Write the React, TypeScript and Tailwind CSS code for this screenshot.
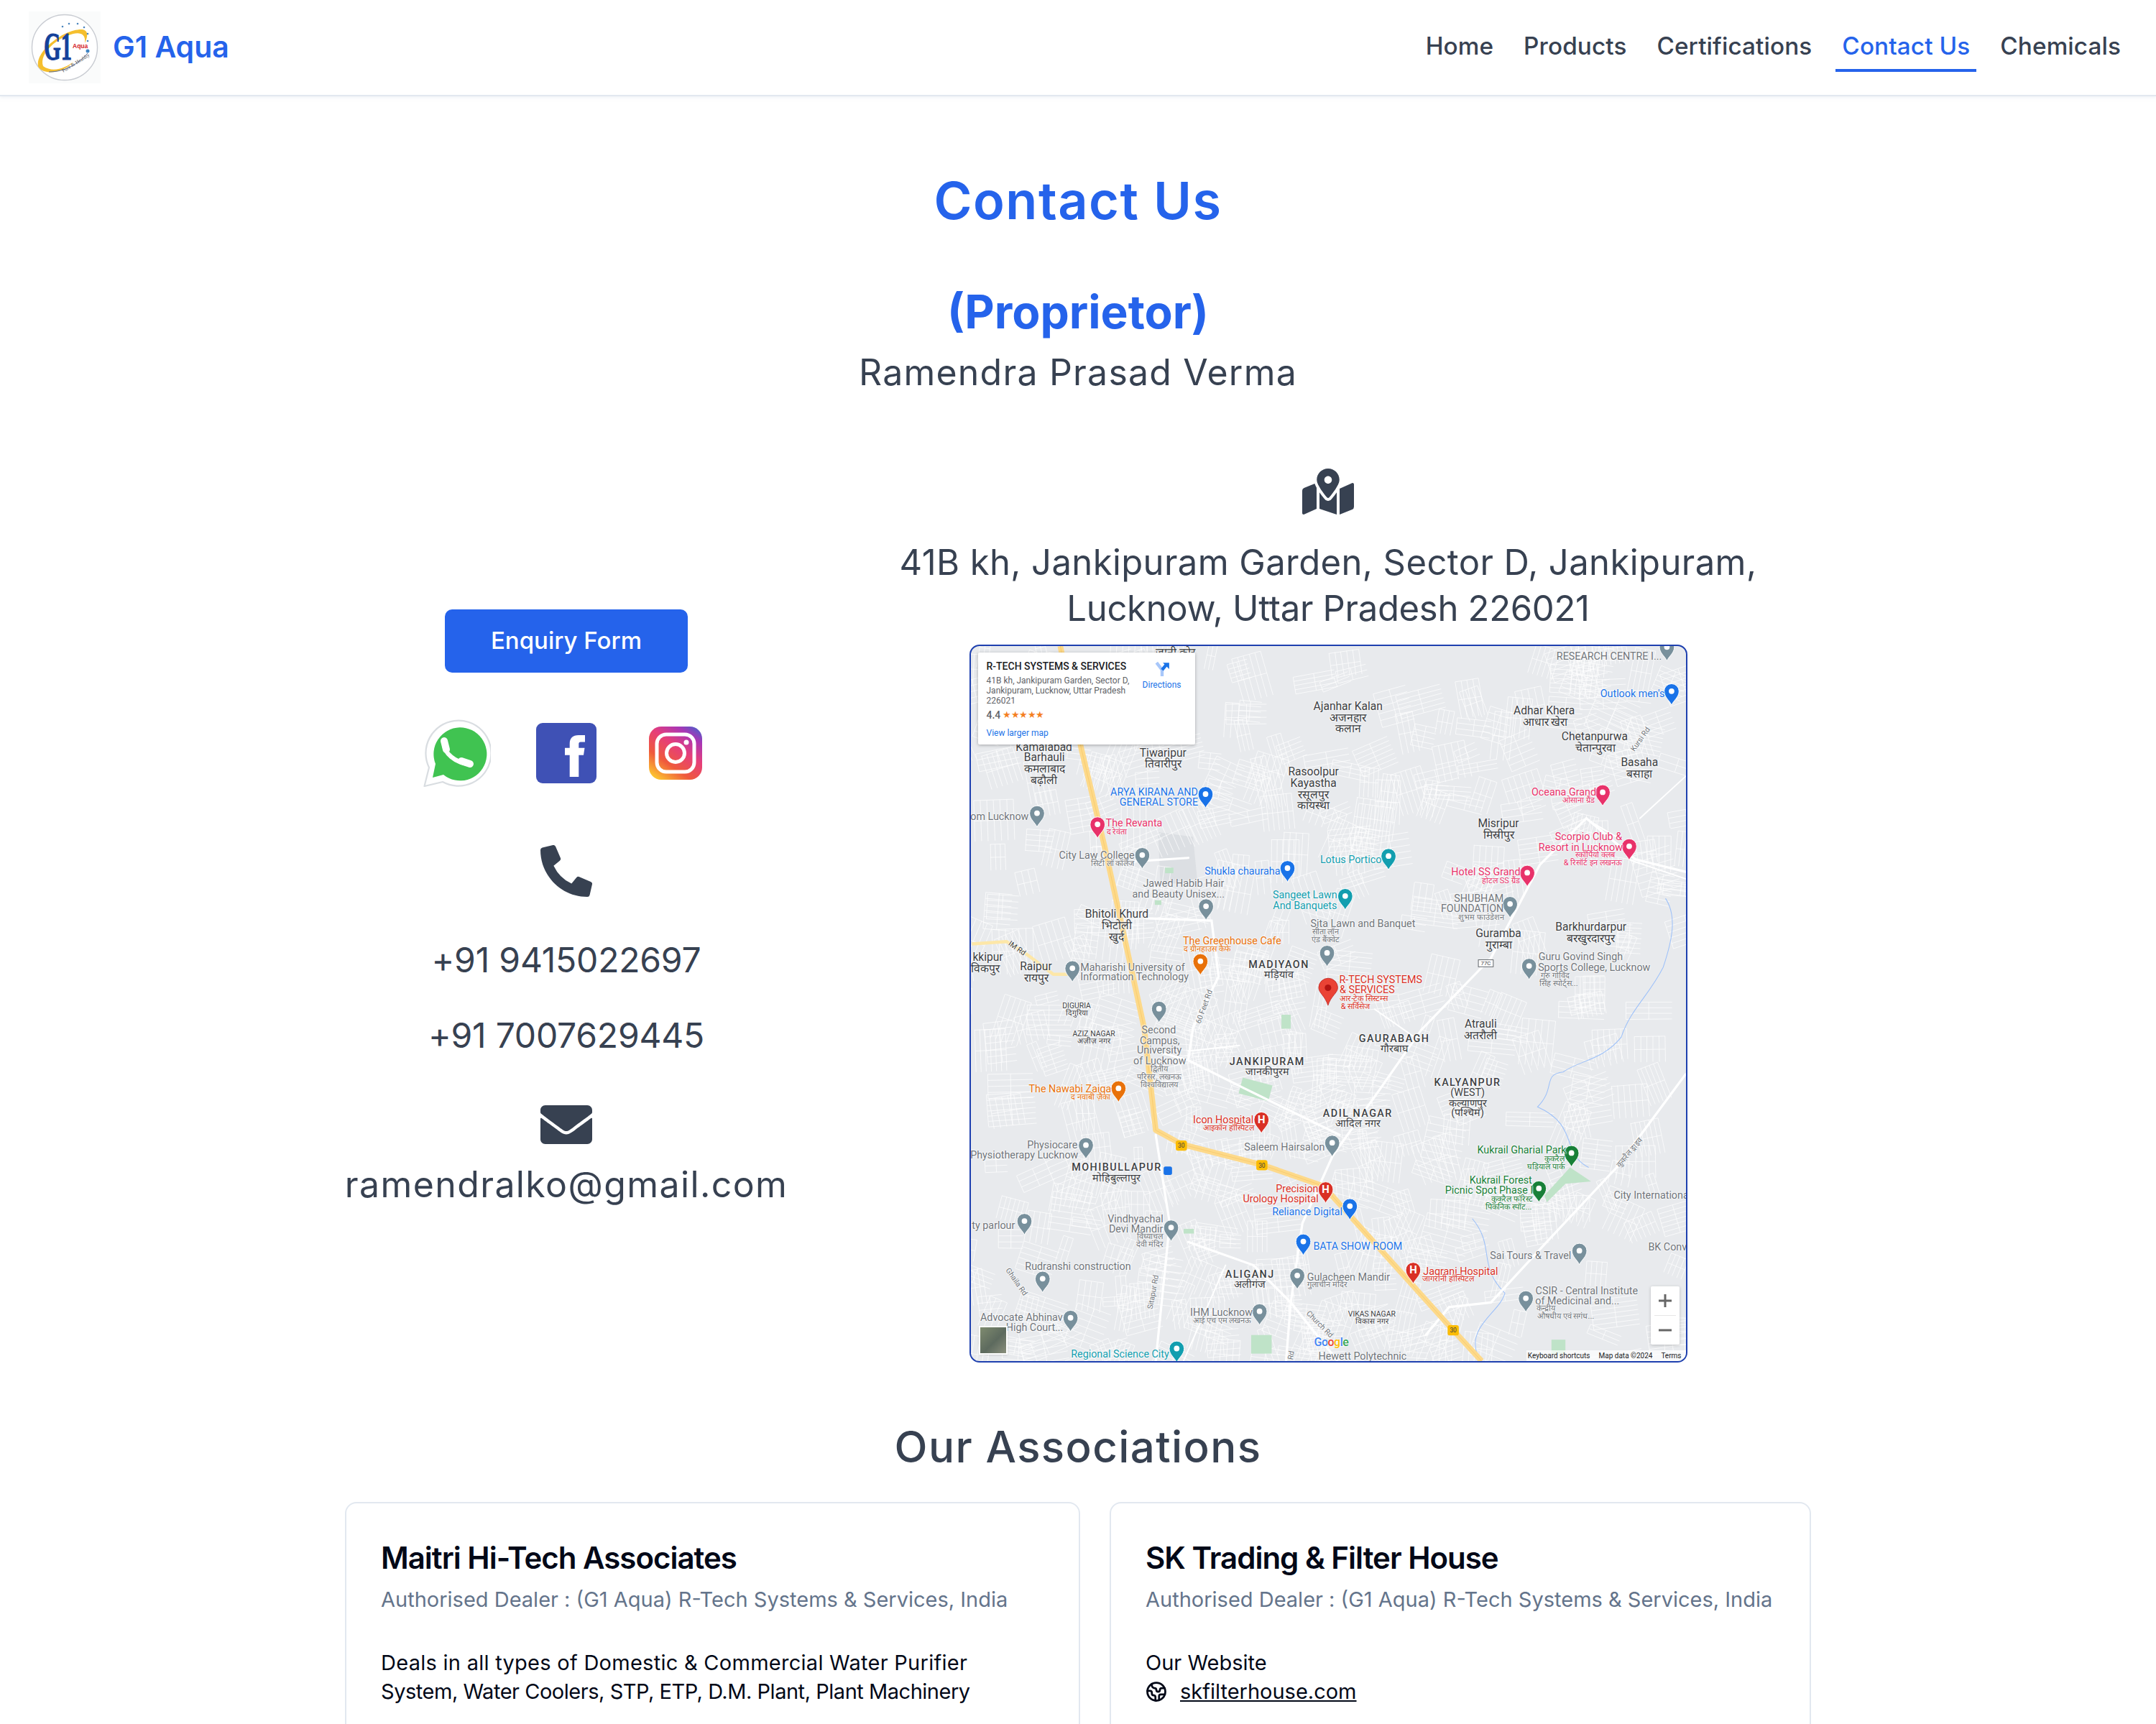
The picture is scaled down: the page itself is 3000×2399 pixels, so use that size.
import { FaEnvelope, FaMapMarkedAlt, FaPhoneAlt } from 'react-icons/fa';
import { Earth } from 'lucide-react';

const navItems = ['Home', 'Products', 'Certifications', 'Contact Us', 'Chemicals'];

// map coordinates are in a 1536 unit space, scaled down to the 999px frame
const K = 0.65;
const DARK = '#3c4043';
const GREY = '#70757a';
const BLUE = '#1a73e8';
const TEAL = '#129eaf';
const PINK = '#e8326a';
const ORANGE = '#e8710a';
const RED = '#d93025';
const GREEN = '#188038';

type Label = [string, number, number, string?, number?, number?];

const labels: Label[] = [
  ['जानी कोर', 452, 25], ['Kamalabad', 170, 228],
  ['Ajanhar Kalan', 821, 140], ['अजनहार', 821, 165], ['कलान', 821, 189],
  ['Adhar Khera', 1241, 150], ['आधार खेरा', 1243, 175],
  ['Chetanpurwa', 1349, 206], ['चेतान्पुरवा', 1350, 230],
  ['Basaha', 1445, 261], ['बसाहा', 1445, 286],
  ['Rasoolpur', 747, 280], ['Kayastha', 747, 305], ['रसूलपुर', 747, 330], ['कायस्था', 747, 353],
  ['Tiwaripur', 425, 240], ['तिवारीपुर', 425, 264],
  ['Barhauli', 171, 250], ['कमलाबाद', 171, 275], ['बढ़ौली', 170, 299],
  ['Misripur', 1143, 392], ['मिस्रीपुर', 1143, 416],
  ['Bhitoli Khurd', 326, 585], ['भिटोली', 326, 610], ['खुर्द', 326, 634],
  ['Guramba', 1143, 627], ['गुराम्बा', 1143, 652],
  ['Barkhurdarpur', 1341, 613], ['बरखुरदारपुर', 1341, 638],
  ['Raipur', 153, 698], ['रायपुर', 153, 723],
  ['kkipur', 50, 678], ['विकपुर', 45, 703],
  ['Atrauli', 1105, 821], ['अतरौली', 1105, 845],
  ['MADIYAON', 673, 692], ['मड़ियांव', 673, 713, DARK, 22],
  ['GAURABAGH', 920, 850], ['गौरबाघ', 920, 871, DARK, 22],
  ['JANKIPURAM', 648, 899], ['जानकीपुरम', 648, 921, DARK, 22],
  ['KALYANPUR', 1077, 944], ['(WEST)', 1077, 966, DARK, 22], ['कल्याणपुर', 1077, 988, DARK, 22], ['(पश्चिम)', 1077, 1009, DARK, 22],
  ['ADIL NAGAR', 842, 1010], ['आदिल नगर', 842, 1032, DARK, 22],
  ['MOHIBULLAPUR', 326, 1126], ['मोहिबुल्लापुर', 326, 1149, DARK, 22],
  ['ALIGANJ', 611, 1354], ['अलीगंज', 611, 1376, DARK, 22],
  ['DIGURIA', 240, 781, DARK, 16], ['दिगुरिया', 240, 796, DARK, 16],
  ['AZIZ NAGAR', 277, 841, DARK, 16], ['अज़ीज़ नगर', 277, 856, DARK, 16],
  ['VIKAS NAGAR', 872, 1440, DARK, 16], ['विकास नगर', 872, 1456, DARK, 16],

  ['RESEARCH CENTRE I...', 1380, 31, GREY], ['om Lucknow', 75, 375, GREY],
  ['City Law College', 283, 458, GREY], ['सिटी लॉ कॉलेज', 317, 476, GREY, 17],
  ['Jawed Habib Hair', 469, 518, GREY], ['and Beauty Unisex...', 458, 540, GREY],
  ['SHUBHAM', 1101, 550, GREY], ['FOUNDATION', 1087, 572, GREY], ['शुभम फाउंडेशन', 1106, 591, GREY, 17],
  ['Sita Lawn and Banquet', 853, 604, GREY], ['सीता लॉन', 773, 622, GREY, 17], ['एंड बैंक्वेट', 773, 639, GREY, 17],
  ['Guru Govind Singh', 1319, 675, GREY], ['Sports College, Lucknow', 1348, 697, GREY],
  ['गुरु गोविंद', 1264, 716, GREY, 17], ['सिंह स्पोर्ट्स...', 1272, 733, GREY, 17],
  ['Maharishi University of', 360, 697, GREY], ['Information Technology', 364, 718, GREY],
  ['Second', 416, 832, GREY], ['Campus,', 418, 854, GREY], ['University', 417, 875, GREY], ['of Lucknow', 418, 897, GREY],
  ['द्वितीय', 417, 916, GREY, 17], ['परिसर, लखनऊ', 417, 933, GREY, 17], ['विश्वविद्यालय', 417, 950, GREY, 17],
  ['Physiocare', 188, 1078, GREY], ['Physiotherapy Lucknow', 128, 1099, GREY],
  ['Saleem Hairsalon', 685, 1082, GREY],
  ['Vindhyachal', 366, 1236, GREY], ['Devi Mandir', 367, 1258, GREY], ['विंध्याचल', 397, 1275, GREY, 17], ['देवी मंदिर', 397, 1292, GREY, 17],
  ['ty parlour', 62, 1250, GREY], ['Rudranshi construction', 243, 1338, GREY],
  ['Gulacheen Mandir', 822, 1360, GREY], ['गुलाचीन मंदिर', 777, 1377, GREY, 17],
  ['Sai Tours & Travel', 1212, 1315, GREY], ['BK Conv', 1505, 1296, GREY], ['City Internationa', 1470, 1186, GREY],
  ['CSIR - Central Institute', 1332, 1390, GREY], ['of Medicinal and...', 1312, 1412, GREY],
  ['केन्द्रीय', 1245, 1429, GREY, 17], ['औषधीय एवं सगंध...', 1287, 1446, GREY, 17],
  ['Advocate Abhinav', 122, 1447, GREY], ['High Court...', 150, 1469, GREY],
  ['IHM Lucknow', 550, 1436, GREY], ['आई एच एम लखनऊ', 552, 1454, GREY, 17],
  ['Hewett Polytechnic', 852, 1530, GREY],

  ["Outlook men's", 1430, 112, BLUE], ['ARYA KIRANA AND', 406, 323, BLUE], ['GENERAL STORE', 416, 344, BLUE],
  ['Shukla chauraha', 595, 492, BLUE], ['Reliance Digital', 734, 1221, BLUE], ['BATA SHOW ROOM', 842, 1294, BLUE],

  ['Lotus Portico', 827, 467, TEAL], ['Sangeet Lawn', 729, 543, TEAL], ['And Banquets', 729, 565, TEAL],
  ['Regional Science City', 333, 1525, TEAL],

  ['Oceana Grand', 1283, 323, PINK], ['ओसाना ग्रैंड', 1315, 341, PINK, 17],
  ['Scorpio Club &', 1336, 418, PINK], ['Resort in Lucknow', 1319, 440, PINK],
  ['स्कॉर्पियो क्लब', 1350, 458, PINK, 17], ['& रिसॉर्ट इन लखनऊ', 1345, 475, PINK, 17],
  ['Hotel SS Grand', 1116, 493, PINK], ['होटल SS ग्रैंड', 1148, 513, PINK, 17],
  ['The Revanta', 363, 389, PINK], ['द रेवंता', 326, 408, PINK, 17],

  ['The Greenhouse Cafe', 573, 640, ORANGE], ['द ग्रीनहाउस कैफे', 520, 659, ORANGE, 17],
  ['The Nawabi Zaiqa', 226, 958, ORANGE], ['द नवाबी ज़ैका', 270, 976, ORANGE, 17],

  ['R-TECH SYSTEMS', 891, 724, RED], ['& SERVICES', 862, 746, RED],
  ['आर-टेक सिस्टम्स', 855, 765, RED, 17], ['& सर्विसेज', 837, 782, RED, 17],
  ['Icon Hospital', 554, 1024, RED], ['आइकॉन हॉस्पिटल', 565, 1043, RED, 17],
  ['Precision', 712, 1172, RED], ['Urology Hospital', 677, 1193, RED],
  ['Jagrani Hospital', 1062, 1349, RED], ['जागरानी हॉस्पिटल', 1035, 1366, RED, 17],

  ['Kukrail Gharial Park', 1193, 1089, GREEN], ['कुकरैल', 1263, 1108, GREEN, 17], ['घड़ियाल पार्क', 1245, 1125, GREEN, 17],
  ['Kukrail Forest', 1148, 1153, GREEN], ['Picnic Spot Phase I', 1123, 1175, GREEN],
  ['कुकरैल फॉरेस्ट', 1172, 1194, GREEN, 17], ['पिकनिक स्पॉट...', 1165, 1211, GREEN, 17],

  ['IM Rd', 112, 658, DARK, 16, 35], ['60 Feet Rd', 513, 783, GREY, 16, -70], ['Kursi Rd', 1448, 210, GREY, 16, -55],
  ['Ghaila Rd', 110, 1372, GREY, 16, 55], ['Sitapur Rd', 405, 1393, GREY, 16, -80],
  ['Church Rd', 760, 1462, GREY, 16, 45], ['Rd', 700, 1528, GREY, 16, -80], ['कुकरैल ड्राइव', 1425, 1095, GREY, 16, -50],
];

const pins: [number, number, string, string?][] = [
  [155, 372, '#78909c'], [381, 462, '#78909c'], [518, 572, '#78909c'], [778, 672, '#78909c'], [1171, 567, '#78909c'],
  [1212, 700, '#78909c'], [231, 705, '#78909c'], [417, 792, '#78909c'], [260, 1085, '#78909c'], [789, 1080, '#78909c'],
  [128, 1248, '#78909c'], [443, 1262, '#78909c'], [167, 1372, '#78909c'], [227, 1456, '#78909c'], [714, 1365, '#78909c'],
  [633, 1442, '#78909c'], [1320, 1312, '#78909c'], [1205, 1414, '#78909c'], [1508, 15, '#78909c'],
  [1518, 110, BLUE], [517, 331, BLUE], [693, 490, BLUE], [827, 1216, BLUE], [727, 1292, BLUE],
  [910, 464, TEAL], [817, 550, TEAL], [455, 1522, TEAL],
  [1370, 327, PINK], [1427, 443, PINK], [1208, 500, PINK], [285, 396, PINK],
  [506, 690, ORANGE], [330, 963, ORANGE],
  [637, 1030, RED, 'H'], [775, 1180, RED, 'H'], [963, 1353, RED, 'H'],
  [1303, 1102, GREEN], [1233, 1178, GREEN],
];

// seeded street blocks: each one is a few parallel lanes with a cross street
function buildStreets() {
  let seed = 11;
  const rnd = () => {
    seed = (seed * 16807) % 2147483647;
    return seed / 2147483647;
  };
  let d = '';
  for (let i = 0; i < 620; i++) {
    const cx = rnd() * 1536 + 13;
    const cy = rnd() * 1536 + 10;
    // the north-east and the river side are thinner than the city
    if (cx > 1100 && cy > 600 && rnd() > 0.55) continue;
    if (cx > 650 && cx < 1050 && cy < 620 && rnd() > 0.6) continue;
    const a = (rnd() * 50 - 25 + (rnd() > 0.5 ? 0 : 90)) * (Math.PI / 180);
    const ux = Math.cos(a);
    const uy = Math.sin(a);
    const lanes = 3 + Math.floor(rnd() * 5);
    const len = 22 + rnd() * 30;
    const gap = 9 + rnd() * 6;
    for (let l = 0; l < lanes; l++) {
      const ox = cx - uy * gap * l;
      const oy = cy + ux * gap * l;
      d += `M${(ox - ux * len).toFixed(0)} ${(oy - uy * len).toFixed(0)}L${(ox + ux * len).toFixed(0)} ${(oy + uy * len).toFixed(0)}`;
    }
    const run = gap * (lanes - 1);
    d += `M${(cx - ux * len).toFixed(0)} ${(cy - uy * len).toFixed(0)}l${(-uy * run).toFixed(0)} ${(ux * run).toFixed(0)}`;
    d += `M${cx.toFixed(0)} ${cy.toFixed(0)}l${(-uy * run).toFixed(0)} ${(ux * run).toFixed(0)}`;
  }
  return d;
}
const streets = buildStreets();

function Logo() {
  return (
    <svg viewBox="0 0 100 100" className="w-[100px] h-[100px] bg-[#fafbfb]">
      <circle cx="50" cy="50" r="45.5" fill="#fff" stroke="#c9ccd2" strokeWidth="1.4" />
      <path d="M14 78 C6 58 48 24 74 25 C84 26 82 36 78 44 C80 30 70 29 62 31 C40 36 14 58 20 76 C34 86 52 78 62 70 C50 84 24 90 14 78 Z" fill="#f5bf2e" />
      <path d="M28 84 C50 84 68 74 82 58" fill="none" stroke="#5a6f9c" strokeWidth="1" />
      <text x="21" y="67" fontFamily="Liberation Serif, serif" fontWeight="700" fontSize="54" fill="#14419a" stroke="#14419a" strokeWidth="1" textLength="39" lengthAdjust="spacingAndGlyphs">G1</text>
      <text x="61" y="51" fontFamily="Liberation Sans, sans-serif" fontWeight="700" fontSize="8.5" fill="#d32027">Aqua</text>
      <text x="48" y="85" fontFamily="Liberation Serif, serif" fontSize="7" fill="#555" transform="rotate(-32 48 85)">Pure & Healthy</text>
      {[[47, 21], [56, 17], [68, 17], [77, 22], [82, 31], [82, 41]].map(([x, y]) => (
        <circle key={x + '-' + y} cx={x} cy={y} r="1.3" fill="#4d86bd" />
      ))}
      <circle cx="82" cy="55" r="2.5" fill="#3f84c4" />
    </svg>
  );
}

function Header() {
  return (
    <header className="h-[134px] bg-white border-b-2 border-[#e2e8f0] shadow-[0_2px_4px_rgba(226,232,240,0.5)] pl-10 pr-10 flex items-start justify-between">
      <div className="flex items-center gap-[17px] pt-4">
        <Logo />
        <span className="text-[41px] leading-[50px] font-semibold text-[#2563eb] -mt-[2px]">G1 Aqua</span>
      </div>
      <nav className="flex gap-6 pt-[40px]">
        {navItems.map((item) => (
          <a
            key={item}
            className={
              'h-[60px] px-[9px] text-[33.3px] leading-[48px] font-medium tracking-[0.1px] border-b-4 ' +
              (item === 'Contact Us' ? 'text-[#2563eb] border-[#2563eb]' : 'text-[#374151] border-transparent')
            }
          >
            {item}
          </a>
        ))}
      </nav>
    </header>
  );
}

function WhatsAppIcon() {
  return (
    <svg viewBox="0 0 94 94" className="w-[94px] h-[94px]">
      <path d="M1.5 93 L8 67 A45.5 45.5 0 1 1 27 87 Z" fill="#fff" stroke="#d9dde1" strokeWidth="2.2" strokeLinejoin="round" />
      <path d="M13 81 L17 62 A37 37 0 1 1 28 77 Z" fill="#40c351" />
      <path d="M29 34 C29 47 44 60 63 62" fill="none" stroke="#fff" strokeWidth="6" />
      <path d="M29 30 L32 42" stroke="#fff" strokeWidth="10" strokeLinecap="round" />
      <path d="M53 58 L65 62" stroke="#fff" strokeWidth="10" strokeLinecap="round" />
    </svg>
  );
}

function FacebookIcon() {
  return (
    <div className="ml-[63px] w-[84px] h-[84px] rounded-[9px] bg-[#3f51b5] flex items-end justify-end pr-[16px] pb-[9px]">
      <svg viewBox="0 0 28 58" className="w-7 h-[58px]">
        <path d="M6.7 58 V27.7 H0 V17.7 H6.7 V12 C6.7 4 11 0 19 0 H28 V9.5 H22 C20 9.5 19.3 10.5 19.3 12.5 V17.7 H27.5 L26 27.7 H19.3 V58 Z" fill="#fff" />
      </svg>
    </div>
  );
}

function InstagramIcon() {
  return (
    <svg viewBox="0 0 74 74" className="ml-[73px] w-[74px] h-[74px]">
      <defs>
        <linearGradient id="ig" x1="0.15" y1="1" x2="0.85" y2="0">
          <stop offset="0" stopColor="#fdc830" />
          <stop offset="0.3" stopColor="#ef5a3c" />
          <stop offset="0.6" stopColor="#e63e7a" />
          <stop offset="0.85" stopColor="#a936b5" />
          <stop offset="1" stopColor="#5b58c6" />
        </linearGradient>
      </defs>
      <rect width="74" height="74" rx="17" fill="url(#ig)" />
      <rect x="11" y="11" width="52" height="52" rx="13" fill="none" stroke="#fff" strokeWidth="5" />
      <circle cx="37" cy="37" r="12.5" fill="none" stroke="#fff" strokeWidth="5" />
      <circle cx="52" cy="22" r="3.5" fill="#fff" />
    </svg>
  );
}

function MapPin({ x, y, color, glyph }: { x: number; y: number; color: string; glyph?: string }) {
  return (
    <g transform={`translate(${x} ${y})`}>
      <path d="M0 27 C-4 17 -16 10 -16 -3 A16 16 0 1 1 16 -3 C16 10 4 17 0 27 Z" fill={color} stroke="#fff" strokeWidth="1.5" />
      {glyph ? (
        <text y="5" textAnchor="middle" fontSize="23" fontWeight="700" fill="#fff" fontFamily="Roboto, sans-serif">{glyph}</text>
      ) : (
        <circle cx="0" cy="-3" r="6" fill="#fff" />
      )}
    </g>
  );
}

function MapLabels() {
  return (
    <>
      {labels.map(([text, x, y, color, size, rot]) => {
        const caps = /^[A-Z ]+$/.test(text) && !color;
        return (
          <span
            key={text + x + y}
            className="absolute whitespace-nowrap leading-none [text-shadow:0_0_2px_#fff,0_0_2px_#fff,0_0_3px_#fff]"
            style={{
              left: (x - 13) * K,
              top: (y - 10) * K,
              color: color ?? DARK,
              fontSize: (size ?? (color || caps ? 22 : 24)) * K,
              letterSpacing: caps ? 1.5 : 0,
              fontWeight: caps ? 500 : 400,
              transform: `translate(-50%, -50%) rotate(${rot ?? 0}deg)`,
            }}
          >
            {text}
          </span>
        );
      })}
    </>
  );
}

function MapEmbed() {
  return (
    <div className="relative w-[999px] h-[999px] mt-[18px] border-2 border-[#1e40af] rounded-[14px] overflow-hidden bg-[#e8eaed] font-['Roboto',sans-serif]">
      <svg viewBox="13 10 1536 1536" className="absolute inset-0 w-full h-full">
        <path d="M415 410 L490 420 L500 520 L420 520 Z" fill="#dcdfe3" />
        <path d={streets} stroke="#fff" strokeWidth="1.3" fill="none" opacity="0.85" />
        {/* parks */}
        <g fill="#bfe3c8">
          <path d="M1245 1190 L1300 1130 L1345 1160 L1290 1165 L1250 1205 Z" />
          <rect x="592" y="945" width="66" height="35" transform="rotate(15 625 960)" />
          <rect x="680" y="802" width="20" height="30" />
          <rect x="1260" y="1500" width="30" height="30" />
          <rect x="615" y="1490" width="44" height="40" />
          <rect x="430" y="486" width="18" height="12" />
          <rect x="408" y="556" width="14" height="10" />
          <rect x="470" y="1262" width="22" height="10" />
        </g>
        {/* river */}
        <path d="M1505 552 C1530 590 1520 640 1500 700 C1470 760 1430 790 1410 850 C1370 900 1320 900 1285 925 C1240 930 1270 960 1230 1000 C1320 1040 1280 1100 1340 1130" fill="none" stroke="#9cc0f9" strokeWidth="1.6" />
        <path d="M1090 1240 C1140 1300 1100 1340 1160 1400 C1150 1440 1080 1470 1100 1530" fill="none" stroke="#9cc0f9" strokeWidth="1.6" />
        {/* main white roads */}
        <g fill="none" stroke="#fff" strokeWidth="5" strokeLinecap="round">
          <path d="M1548 495 L1440 468 L1335 380 L1235 480 L1130 680 L980 835 L900 950 L790 1105 L725 1250 L700 1420 L690 1545" />
          <path d="M1548 930 L1400 1130 L1250 1290 L1130 1420 L1040 1430 L990 1490" />
          <path d="M330 475 L480 465 M390 595 L530 600 L545 720 L490 830 L480 900 L600 960 L805 1060" />
          <path d="M480 900 L410 880 M410 1060 L440 1250 L410 1545 M480 1290 L620 1340 L700 1420 L800 1545" />
          <path d="M880 790 L980 860 M480 880 L590 868 M560 1340 L470 1545" strokeWidth="3" />
          <path d="M1450 380 L1548 290 M1340 385 L1400 420 M1430 470 L1548 510" strokeWidth="3" />
        </g>
        {/* highway */}
        <g fill="none" strokeLinejoin="round">
          <path d="M205 10 L250 230 L300 440 L385 830 L410 1050 L465 1080 L640 1125 L770 1170 L1040 1470 L1110 1546" stroke="#fdd98a" strokeWidth="12" />
          <path d="M15 650 L90 645 L130 670 L190 715 L232 715" stroke="#fde7a8" strokeWidth="7" />
          <path d="M205 10 L250 230 L300 440 L385 830 L410 1050 L465 1080 L640 1125 L770 1170 L1040 1470 L1110 1546" stroke="#f6c560" strokeWidth="1" />
        </g>
        {/* highway shields */}
        {[[465, 1083], [638, 1125], [1049, 1480]].map(([x, y]) => (
          <g key={x}>
            <rect x={x - 12} y={y - 11} width="24" height="22" rx="5" fill="#fbbc04" />
            <text x={x} y={y + 5} textAnchor="middle" fontSize="13" fill="#3c4043" fontFamily="Roboto, sans-serif">30</text>
          </g>
        ))}
        <rect x="1103" y="684" width="32" height="15" fill="#fff" stroke="#5f6368" strokeWidth="1.5" />
        <text x="1119" y="696" textAnchor="middle" fontSize="12" fill="#3c4043" fontFamily="Roboto, sans-serif">77C</text>
        <rect x="427" y="1128" width="18" height="18" rx="4" fill={BLUE} />
        {pins.map(([x, y, c, g]) => (
          <MapPin key={x + '-' + y} x={x} y={y} color={c} glyph={g} />
        ))}
        {/* selected place */}
        <path d="M780 782 C774 762 760 755 760 744 A20 20 0 1 1 801 744 C801 755 786 762 780 782 Z" fill="#ea4335" stroke="#b31412" strokeWidth="1" />
        <circle cx="780" cy="744" r="7" fill="#b31412" />
      </svg>

      <MapLabels />

      {/* place card */}
      <div className="absolute left-[10px] top-[9px] w-[302px] h-[128px] bg-white rounded-[2px] shadow-[0_1px_4px_rgba(0,0,0,0.3)] pt-[10px] pl-3 text-[12px] leading-[14px] text-[#5f6368]">
        <p className="text-[14px] leading-[18px] font-medium text-[#202124]">R-TECH SYSTEMS &amp; SERVICES</p>
        <p className="w-[205px] mt-[4px]">41B kh, Jankipuram Garden, Sector D, Jankipuram, Lucknow, Uttar Pradesh 226021</p>
        <div className="flex items-center gap-[3px] mt-[4px]">
          <span className="text-[14px] leading-[18px] font-medium">4.4</span>
          <span className="text-[#f4801f] text-[13px] leading-[16px] tracking-[-0.5px]">★★★★★</span>
        </div>
        <p className="text-[#1a73e8] mt-[9px]">View larger map</p>
        <div className="absolute right-[19px] top-[12px] flex flex-col items-center text-[#1a73e8]">
          <svg viewBox="0 0 20 20" className="w-[22px] h-[22px]">
            <path d="M3 2 L10 11 V19" fill="none" stroke="#a8c7fa" strokeWidth="4" />
            <path d="M10 11 L15 5" fill="none" stroke="#1a73e8" strokeWidth="4" />
            <path d="M11 2 H19 V10 Z" fill="#1a73e8" />
          </svg>
          <span className="mt-[4px]">Directions</span>
        </div>
      </div>

      {/* satellite toggle */}
      <div className="absolute left-[11px] bottom-[9px] w-10 h-10 border-2 border-white bg-[linear-gradient(135deg,#7f8b6f,#5d6a5e_55%,#8a8f7c)] shadow" />

      {/* zoom buttons */}
      <div className="absolute right-[9px] bottom-[23px] w-10 h-[81px] bg-white rounded-[2px] shadow-[0_1px_4px_rgba(0,0,0,0.2)] flex flex-col items-center justify-between text-[#666]">
        <svg viewBox="0 0 18 18" className="w-[18px] h-[18px] mt-[11px]"><path d="M7.5 0h3v7.5H18v3h-7.5V18h-3v-7.5H0v-3h7.5z" fill="#666" /></svg>
        <div className="absolute left-[5px] right-[5px] top-10 h-px bg-[#e6e6e6]" />
        <svg viewBox="0 0 18 18" className="w-[18px] h-[18px] mb-[11px]"><path d="M0 7.5h18v3H0z" fill="#666" /></svg>
      </div>

      {/* google mark + attribution */}
      <span className="absolute left-[478px] bottom-[18px] text-[16px] leading-none font-medium tracking-[-0.5px] text-[#4285f4] [text-shadow:0_0_2px_#fff,0_0_2px_#fff]">
        Go<span className="text-[#ea4335]">o</span><span className="text-[#fbbc04]">g</span><span className="text-[#4285f4]">l</span><span className="text-[#34a853]">e</span>
      </span>
      <div className="absolute right-0 bottom-0 h-[15px] bg-white/70 flex items-center gap-[12px] pl-[2px] pr-[6px] text-[10px] leading-none text-[#202124]">
        <span>Keyboard shortcuts</span>
        <span>Map data ©2024</span>
        <span>Terms</span>
      </div>
    </div>
  );
}

function ContactColumn() {
  return (
    <div className="w-[616px] pt-[200px] flex flex-col items-center text-[#374151]">
      <a className="w-[338px] h-[88px] rounded-[10px] bg-[#2563eb] flex items-center justify-center text-[33px] font-medium text-white">
        Enquiry Form
      </a>
      <div className="mt-[65px] -ml-[10px] h-[94px] flex items-center">
        <WhatsAppIcon />
        <FacebookIcon />
        <InstagramIcon />
      </div>
      <FaPhoneAlt className="mt-[81px] text-[72px]" />
      <p className="mt-[56px] text-[48px] leading-[64px] tracking-[-0.2px]">+91 9415022697</p>
      <p className="mt-[41px] text-[48px] leading-[64px] tracking-[-0.2px]">+91 7007629445</p>
      <FaEnvelope className="mt-[56px] text-[72px]" />
      <p className="mt-[15px] text-[50px] leading-[64px] tracking-[1.4px]">ramendralko@gmail.com</p>
    </div>
  );
}

function Card({ title, width, children }: { title: string; width: string; children: React.ReactNode }) {
  return (
    <div className={'rounded-2xl border-2 border-[#e2e8f0] bg-white px-[48px] pt-[50px] h-[400px] ' + width}>
      <h3 className="text-[42px] leading-[52px] font-semibold tracking-[-1px] text-[#020817]">{title}</h3>
      <p className="mt-[12px] text-[29px] leading-[40px] whitespace-nowrap text-[#64748b]">Authorised Dealer : (G1 Aqua) R-Tech Systems &amp; Services, India</p>
      <div className="mt-[48px] text-[29px] leading-[40px] text-[#020817]">{children}</div>
    </div>
  );
}

export default function App() {
  return (
    <div className="h-[2399px] overflow-hidden bg-white font-['Inter',sans-serif]">
      <Header />
      <main className="mx-auto w-[2040px]">
        <h1 className="mt-[109px] text-center text-[72px] leading-[72px] font-semibold tracking-[1.5px] text-[#2563eb]">Contact Us</h1>
        <h2 className="mt-[87px] text-center text-[64px] leading-[64px] font-bold text-[#2563eb]">(Proprietor)</h2>
        <p className="mt-[28px] text-center text-[50px] leading-[48px] text-[#374151] tracking-[1.2px]">Ramendra Prasad Verma</p>

        <section className="mt-[106px] flex items-start gap-20">
          <ContactColumn />
          <div className="w-[1344px] flex flex-col items-center text-[#374151]">
            <FaMapMarkedAlt className="text-[72px]" />
            <p className="mt-[31px] text-center text-[49px] leading-[64px]">
              <span className="block tracking-[0.4px]">41B kh, Jankipuram Garden, Sector D, Jankipuram,</span>
              <span className="block tracking-[-0.3px]">Lucknow, Uttar Pradesh 226021</span>
            </p>
            <MapEmbed />
          </div>
        </section>

        <h2 className="mt-[87px] text-center text-[60px] leading-[60px] font-medium tracking-[1.4px] text-[#374151]">Our Associations</h2>
        <div className="mt-[47px] flex justify-between">
          <Card title="Maitri Hi-Tech Associates" width="w-[1023px]">
            <p className="tracking-[0.27px]">Deals in all types of Domestic &amp; Commercial Water Purifier</p>
            <p className="tracking-[-0.47px]">System, Water Coolers, STP, ETP, D.M. Plant, Plant Machinery</p>
          </Card>
          <Card title="SK Trading & Filter House" width="w-[976px]">
            <p>Our Website</p>
            <a className="flex items-center gap-[18px]">
              <Earth className="w-[30px] h-[30px]" strokeWidth={2.2} />
              <span className="underline">skfilterhouse.com</span>
            </a>
          </Card>
        </div>
      </main>
    </div>
  );
}
